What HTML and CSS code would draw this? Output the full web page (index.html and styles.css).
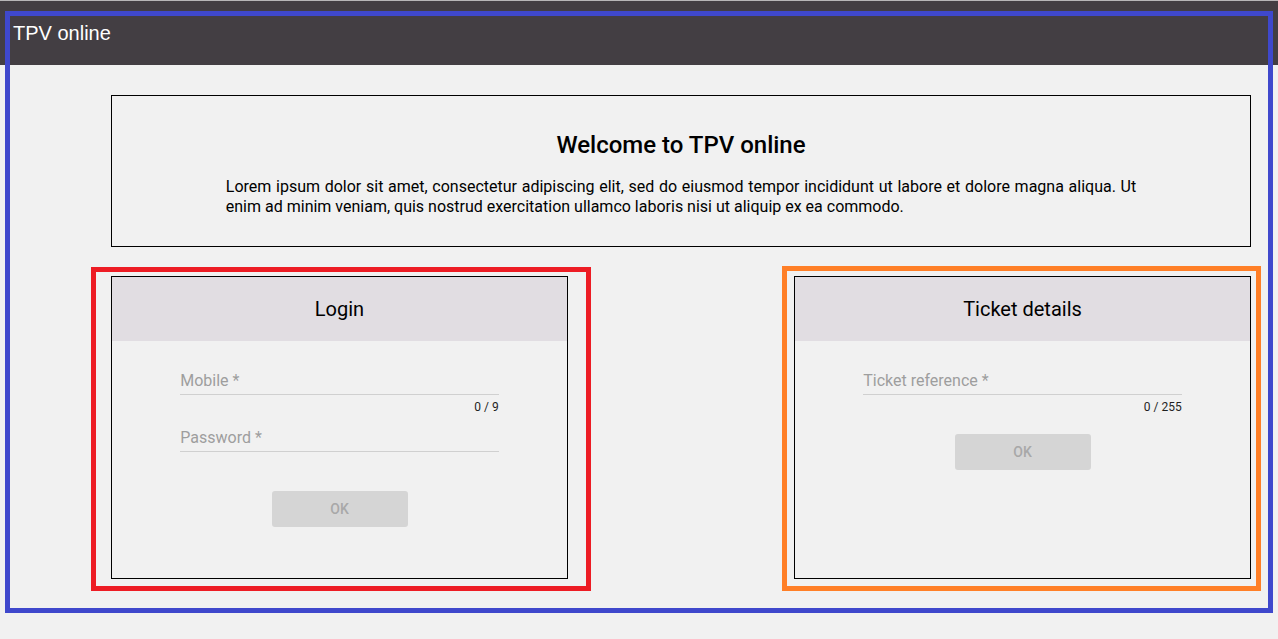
FILE: index.html
```html
<!DOCTYPE html>
<html lang="en">
<head>
<meta charset="utf-8">
<title>TPV online</title>
<link rel="stylesheet" href="styles.css">
</head>
<body>
<header class="topbar"><span class="brand">TPV online</span></header>
<main class="content">
  <section class="welcome">
    <h1 class="welcome-title">Welcome to TPV online</h1>
    <p class="welcome-text">Lorem ipsum dolor sit amet, consectetur adipiscing elit, sed do eiusmod tempor incididunt ut labore et dolore magna aliqua. Ut enim ad minim veniam, quis nostrud exercitation ullamco laboris nisi ut aliquip ex ea commodo.</p>
  </section>
  <div class="cards">
    <section class="card">
      <div class="card-head">Login</div>
      <form class="card-body">
        <div class="field">
          <div class="field-input"><span class="field-label">Mobile *</span></div>
          <div class="field-hint">0 / 9</div>
        </div>
        <div class="field">
          <div class="field-input"><span class="field-label">Password *</span></div>
          <div class="field-hint"></div>
        </div>
        <button class="btn" type="button" disabled>OK</button>
      </form>
    </section>
    <section class="card">
      <div class="card-head">Ticket details</div>
      <form class="card-body">
        <div class="field">
          <div class="field-input"><span class="field-label">Ticket reference *</span></div>
          <div class="field-hint">0 / 255</div>
        </div>
        <button class="btn" type="button" disabled>OK</button>
      </form>
    </section>
  </div>
</main>
<div class="mark mark-blue"></div>
<div class="mark mark-red"></div>
<div class="mark mark-orange"></div>
</body>
</html>
```

FILE: styles.css
```css
* { box-sizing: border-box; }
html, body {
  margin: 0;
  padding: 0;
  background: #f1f1f1;
  font-family: Roboto, "Noto Sans", sans-serif;
  color: #000;
}
body { position: relative; min-height: 639px; }

.topbar {
  height: 65px;
  border-top: 1px solid #b8b6b8;
  background: #433e43;
  display: flex;
  align-items: center;
  padding-left: 13px;
}
.brand {
  color: #fff;
  font-family: "Liberation Sans", Arial, sans-serif;
  font-size: 20px;
  line-height: 24px;
}

.content {
  padding: 30px 27px 0 111px;
}

.welcome {
  border: 1px solid #000;
  height: 152px;
  padding: 35px 0 0;
}
.welcome-title {
  margin: 0;
  text-align: center;
  font-size: 24px;
  line-height: 28px;
  font-weight: 500;
}
.welcome-text {
  width: 80%;
  margin: 18px auto 0;
  font-size: 16px;
  line-height: 20px;
  text-align: justify;
}

.cards {
  display: flex;
  justify-content: space-between;
  margin-top: 29px;
}
.card {
  width: 457px;
  height: 303px;
  border: 1px solid #000;
}
.card-head {
  height: 64px;
  background: #e1dde2;
  display: flex;
  align-items: center;
  justify-content: center;
  font-size: 20px;
  line-height: 24px;
}
.card-body {
  margin: 0;
  padding-top: 29px;
  display: flex;
  flex-direction: column;
  align-items: center;
}
.field {
  width: 70%;
  margin-bottom: 10px;
}
.field-input {
  height: 25px;
  border-bottom: 1px solid #d0d0d0;
  padding-top: 1px;
}
.field-label {
  display: block;
  font-size: 16px;
  line-height: 20px;
  color: #9e9e9e;
}
.field-hint {
  height: 22px;
  padding-top: 5px;
  text-align: right;
  font-size: 12px;
  line-height: 14px;
  color: #1f1f1f;
}
.btn {
  margin-top: 7px;
  width: 136px;
  height: 36px;
  border: 0;
  border-radius: 3px;
  background: #d5d5d5;
  color: #a8a8a8;
  font-family: Roboto, sans-serif;
  font-size: 14px;
  font-weight: 500;
}

.mark {
  position: absolute;
  border: 5px solid;
  pointer-events: none;
}
.mark-blue { left: 5px; top: 11px; width: 1268px; height: 602px; border-color: #3f48cc; }
.mark-red { left: 91px; top: 267px; width: 500px; height: 324px; border-color: #ed1c24; }
.mark-orange { left: 782px; top: 266px; width: 479px; height: 325px; border-color: #ff7f27; }
```
